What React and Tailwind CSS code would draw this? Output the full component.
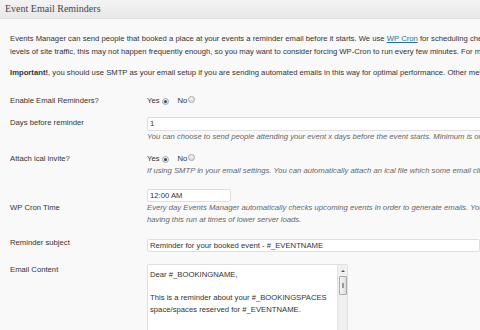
import React from "react";

// Event Email Reminders — settings panel (WP admin style, scaled down)

function Radio({ checked }) {
  return (
    <span className="inline-flex items-center justify-center w-[7px] h-[7px] rounded-full border border-[#a8a8a8] bg-gradient-to-b from-[#f4f4f4] to-[#dcdcdc]">
      {checked && <span className="w-[3px] h-[3px] rounded-full bg-[#1f4f7a]" />}
    </span>
  );
}

function YesNo({ yes }) {
  return (
    <div className="flex items-center h-[12px]">
      <span>Yes</span>
      <span className="ml-[2px]"><Radio checked={yes} /></span>
      <span className="ml-[9px]">No</span>
      <span className="ml-[1px]"><Radio checked={!yes} /></span>
    </div>
  );
}

export default function App() {
  return (
    <div
      className="w-[480px] h-[330px] overflow-hidden bg-[#f9f9f9] text-[#333] text-[7.7px] leading-[12px]"
      style={{ fontFamily: '"Liberation Sans", Arial, sans-serif' }}
    >
      <div
        className="h-[19px] border-b border-[#dfdfdf] bg-gradient-to-b from-[#f3f3f3] to-[#e8e8e8] pl-[5px] flex items-center text-[#464646] text-[10px]"
        style={{ fontFamily: '"Liberation Serif", Georgia, serif' }}
      >
        Event Email Reminders
      </div>

      <div className="pl-[10px] whitespace-nowrap">
        <div className="mt-[13px] leading-[13px]">
          <div>
            Events Manager can send people that booked a place at your events a reminder email before it starts. We use{" "}
            <span className="text-[#21759b] underline">WP Cron</span> for scheduling checks for future events, which relies on site visits.
          </div>
          <div>
            levels of site traffic, this may not happen frequently enough, so you may want to consider forcing WP-Cron to run every few minutes. For more information
          </div>
        </div>

        <div className="mt-[8px] leading-[13px]">
          <span className="font-bold">Important!</span>, you should use SMTP as your email setup if you are sending automated emails in this way for optimal performance. Other methods are not recommended.
        </div>

        <div className="mt-[16px] flex">
          <div className="w-[137px] shrink-0">Enable Email Reminders?</div>
          <YesNo yes />
        </div>

        <div className="mt-[10px] flex">
          <div className="w-[137px] shrink-0">Days before reminder</div>
          <div className="w-[400px]">
            <div className="h-[14px] border border-[#dfdfdf] bg-white rounded-[2px] pl-[2px] flex items-center">1</div>
            <div className="italic text-[#666]">
              You can choose to send people attending your event x days before the event starts. Minimum is one day.
            </div>
          </div>
        </div>

        <div className="mt-[10px] flex">
          <div className="w-[137px] shrink-0">Attach ical invite?</div>
          <div>
            <YesNo yes />
            <div className="italic text-[#666]">
              If using SMTP in your email settings. You can automatically attach an ical file which some email clients will use.
            </div>
          </div>
        </div>

        <div className="mt-[12px] flex">
          <div className="w-[137px] shrink-0 mt-[13px]">WP Cron Time</div>
          <div>
            <div className="w-[84px] h-[13px] border border-[#dfdfdf] bg-white rounded-[2px] pl-[2px] flex items-center">12:00 AM</div>
            <div className="italic text-[#666]">
              Every day Events Manager automatically checks upcoming events in order to generate emails. You can choose to consider
            </div>
            <div className="italic text-[#666]">having this run at times of lower server loads.</div>
          </div>
        </div>

        <div className="mt-[13px] flex">
          <div className="w-[137px] shrink-0 mt-[-2px]">Reminder subject</div>
          <div className="w-[400px] h-[13px] border border-[#dfdfdf] bg-white rounded-[2px] pl-[2px] flex items-center">
            Reminder for your booked event - #_EVENTNAME
          </div>
        </div>

        <div className="mt-[12px] flex">
          <div className="w-[137px] shrink-0">Email Content</div>
          <div className="w-[201px] h-[80px] border border-[#dfdfdf] bg-white rounded-[2px] flex">
            <div className="flex-1 pl-[2px] pt-[4px] leading-[11.5px] whitespace-pre">
              {"Dear #_BOOKINGNAME,\n\nThis is a reminder about your #_BOOKINGSPACES\nspace/spaces reserved for #_EVENTNAME."}
            </div>
            <div className="w-[10px] bg-[#f0f0f0] border-l border-[#e4e4e4] flex flex-col items-center">
              <svg width="6" height="6" viewBox="0 0 6 6" className="mt-[3px]">
                <path d="M1 4 L3 2 L5 4 Z" fill="#555" />
              </svg>
              <div className="mt-[2px] w-[8px] h-[19px] border border-[#a9a9a9] rounded-[1px] bg-gradient-to-r from-[#f6f6f6] to-[#dcdcdc] flex items-center justify-center">
                <div className="w-[2px] h-[5px] border-x border-[#999]" />
              </div>
            </div>
          </div>
        </div>
      </div>
    </div>
  );
}
